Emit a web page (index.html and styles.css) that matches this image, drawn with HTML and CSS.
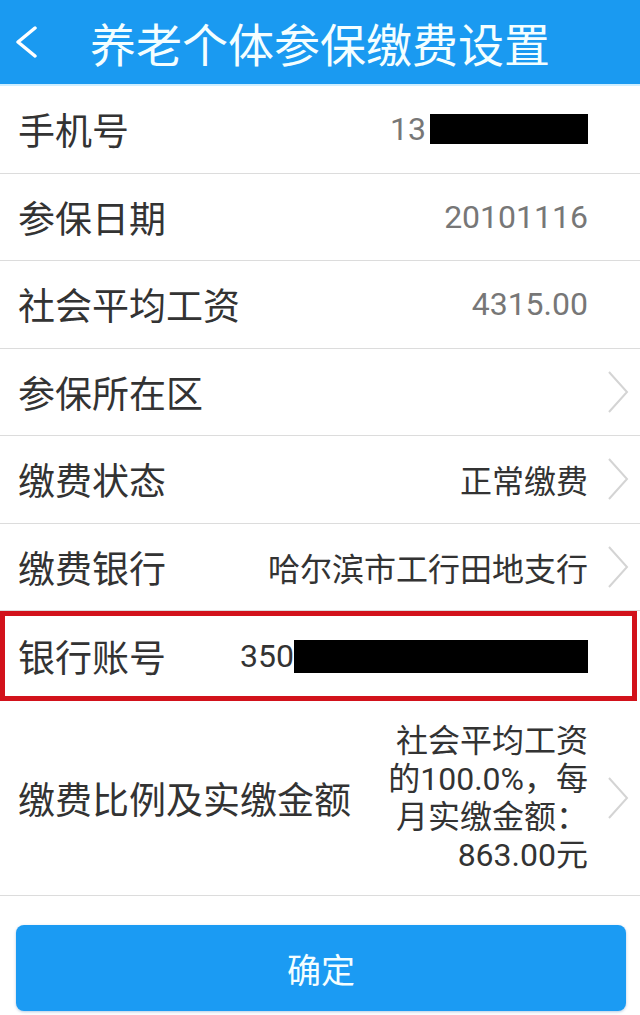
FILE: index.html
```html
<!DOCTYPE html>
<html lang="zh-CN">
<head>
    <meta charset="UTF-8">
    <meta name="viewport" content="width=device-width, initial-scale=1.0">
    <title>养老个体参保缴费设置</title>
    <link rel="stylesheet" href="styles.css">
</head>
<body>
    <div class="header">
        <svg class="back" width="24" height="32" viewBox="0 0 24 32">
            <polyline points="21,2 4,16 21,30" fill="none" stroke="#fff" stroke-width="3.5" stroke-linejoin="round" stroke-linecap="round"/>
        </svg>
        <h1>养老个体参保缴费设置</h1>
    </div>

    <ul class="list">
        <li class="row">
            <span class="label">手机号</span>
            <span class="value light">13<i class="mask mask-phone"></i></span>
            <span class="arrow"></span>
        </li>
        <li class="row">
            <span class="label">参保日期</span>
            <span class="value light">20101116</span>
            <span class="arrow"></span>
        </li>
        <li class="row">
            <span class="label">社会平均工资</span>
            <span class="value light">4315.00</span>
            <span class="arrow"></span>
        </li>
        <li class="row">
            <span class="label">参保所在区</span>
            <span class="value"></span>
            <span class="arrow"><svg width="22" height="42" viewBox="0 0 22 42"><polyline points="2,1 20,21 2,41" fill="none" stroke="#d4d4d4" stroke-width="2"/></svg></span>
        </li>
        <li class="row">
            <span class="label">缴费状态</span>
            <span class="value">正常缴费</span>
            <span class="arrow"><svg width="22" height="42" viewBox="0 0 22 42"><polyline points="2,1 20,21 2,41" fill="none" stroke="#d4d4d4" stroke-width="2"/></svg></span>
        </li>
        <li class="row">
            <span class="label">缴费银行</span>
            <span class="value">哈尔滨市工行田地支行</span>
            <span class="arrow"><svg width="22" height="42" viewBox="0 0 22 42"><polyline points="2,1 20,21 2,41" fill="none" stroke="#d4d4d4" stroke-width="2"/></svg></span>
        </li>
        <li class="row row-mark">
            <span class="label">银行账号</span>
            <span class="value account">350<i class="mask mask-account"></i></span>
            <span class="arrow"></span>
        </li>
        <li class="row row-tall">
            <span class="label">缴费比例及实缴金额</span>
            <span class="value multi">社会平均工资<br>的100.0%，每<br>月实缴金额：<br>863.00元</span>
            <span class="arrow"><svg width="22" height="42" viewBox="0 0 22 42"><polyline points="2,1 20,21 2,41" fill="none" stroke="#d4d4d4" stroke-width="2"/></svg></span>
        </li>
    </ul>

    <div class="foot">
        <button class="btn">确定</button>
    </div>
</body>
</html>
```

FILE: styles.css
```css
*{margin:0; padding:0; box-sizing:border-box;}
li{list-style: none;}
html,body{height: 100%;}
body{
    font-family: "Noto Sans CJK SC", "Noto Sans", sans-serif;
    background-color: #fff;
    color: #333;
}

.header{
    height: 86px;
    display: flex;
    align-items: center;
    background-color: #1a9af1;
    border-bottom: 2px solid #cfeeff;
    color: #f4feff;
}
.back{
    margin: 0 0 0 14px;
    flex: none;
}
.header h1{
    margin-left: 52px;
    font-size: 46px;
    font-weight: normal;
}

.row{
    height: 87.5px;
    display: flex;
    align-items: center;
    padding-left: 18px;
    border-bottom: 1px solid #dcdcdc;
}
.label{
    font-size: 37px;
    color: #333;
    white-space: nowrap;
}
.value{
    flex: 1;
    text-align: right;
    font-size: 32px;
    color: #333;
    display: flex;
    justify-content: flex-end;
    align-items: center;
}
.value.light{
    font-family: Roboto, "Noto Sans CJK SC", sans-serif;
    color: #777;
}
.arrow{
    width: 52px;
    flex: none;
    display: flex;
    justify-content: center;
    padding-left: 8px;
}
.mask{
    display: inline-block;
    background-color: #000;
}
.mask-phone{
    width: 158px; height: 30px;
    margin-left: 4px;
}
.mask-account{
    width: 294px; height: 33px;
}
.account{
    font-family: Roboto, "Noto Sans CJK SC", sans-serif;
    color: #333;
}

.row-mark{
    height: 90px;
    margin-right: 3px;
    border: 5px solid #d2121b;
    padding-left: 13px;
}
.row-mark .arrow{
    width: 44px;
}

.row-tall{
    height: 195px;
}
.multi{
    display: block;
    line-height: 38px;
    font-family: Roboto, "Noto Sans CJK SC", sans-serif;
}

.foot{
    padding: 29px 14px 0 16px;
}
.btn{
    width: 100%;
    height: 86px;
    border: none;
    border-radius: 8px;
    background-color: #1b9bf3;
    color: #f4feff;
    font-family: "Noto Sans CJK SC", sans-serif;
    font-size: 34px;
    box-shadow: 0 1px 3px rgba(0,80,160,0.3);
}
```
